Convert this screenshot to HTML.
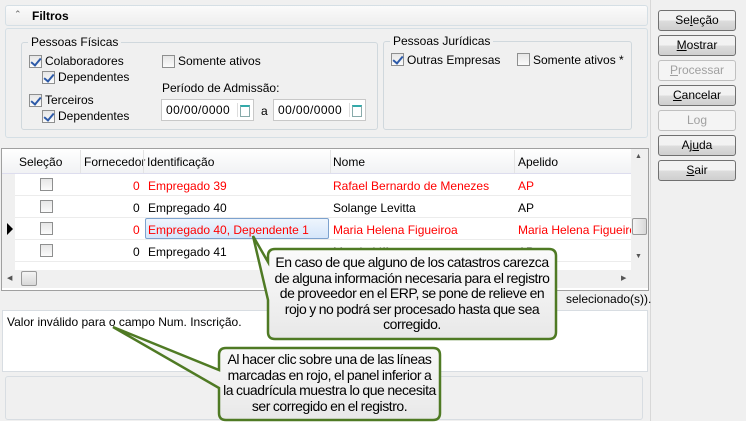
<!DOCTYPE html>
<html><head><meta charset="utf-8"><style>
*{box-sizing:border-box;margin:0;padding:0}
body{width:746px;height:434px;background:#f0f0f0;font:12px "Liberation Sans",sans-serif;color:#000;position:relative;overflow:hidden}
.a{position:absolute}
.box{position:absolute;border:1px solid #d5dfe5;border-radius:3px}
.cb{position:absolute;width:13px;height:13px;border:1px solid #8e8f8f;background:linear-gradient(#e6e6e6,#fbfbfb)}
.cb.c::after{content:"";position:absolute;left:3px;top:0px;width:4px;height:8px;border:solid #2d5aa8;border-width:0 2px 2px 0;transform:rotate(40deg)}
.t{position:absolute;white-space:nowrap;font-size:12px}
.btn{position:absolute;left:658px;width:78px;height:21px;border:1px solid #707070;border-radius:3px;background:linear-gradient(#f2f2f2 50%,#dddddd 50%,#cfcfcf);text-align:center;line-height:19px;font-size:12px}
.btn.d{border-color:#c0c0c0;color:#a0a0a0;background:#f4f4f4}
.date{position:absolute;height:22px;width:93px;border:1px solid #c8c8c8;background:#fff;font-size:12px;line-height:20px;padding-left:4px;letter-spacing:.4px}
.date::before{content:"";position:absolute;right:15px;top:3px;width:1px;height:14px;background:#ddd}
.date::after{content:"";position:absolute;right:3px;top:5px;width:8px;height:9px;border:1px solid #8aa;border-top:2px solid #3aa}
.row{position:absolute;left:15px;width:616px;height:22px;border-bottom:1px solid #ececec;background:#fff}
.red{color:#f00}
.co{position:absolute;text-align:center;font:14px/15.6px 'Liberation Sans',sans-serif;letter-spacing:-.45px;word-spacing:-.5px}
</style></head><body>
<div class="box" style="left:5px;top:5px;width:643px;height:21px;background:linear-gradient(#fbfbfb,#eeeeee)"></div>
<div class="t" style="left:14px;top:9px;font-size:9px;color:#666">&#8963;</div>
<div class="t" style="left:32px;top:9px;font-weight:bold">Filtros</div>
<div class="box" style="left:5px;top:28px;width:643px;height:110px"></div>
<div class="box" style="left:21px;top:42px;width:357px;height:88px;border-color:#d0d8dd"></div>
<div class="t" style="left:28px;top:35px;background:#f0f0f0;padding:0 3px">Pessoas Físicas</div>
<div class="cb c" style="left:29px;top:55px"></div><div class="t" style="left:45px;top:54px">Colaboradores</div>
<div class="cb c" style="left:42px;top:71px"></div><div class="t" style="left:58px;top:70px">Dependentes</div>
<div class="cb c" style="left:29px;top:94px"></div><div class="t" style="left:45px;top:93px">Terceiros</div>
<div class="cb c" style="left:42px;top:110px"></div><div class="t" style="left:58px;top:109px">Dependentes</div>
<div class="cb" style="left:162px;top:55px"></div><div class="t" style="left:178px;top:54px">Somente ativos</div>
<div class="t" style="left:162px;top:81px">Período de Admissão:</div>
<div class="date" style="left:161px;top:99px">00/00/0000</div>
<div class="t" style="left:261px;top:104px">a</div>
<div class="date" style="left:273px;top:99px">00/00/0000</div>
<div class="box" style="left:383px;top:41px;width:249px;height:89px;border-color:#d0d8dd"></div>
<div class="t" style="left:390px;top:34px;background:#f0f0f0;padding:0 3px">Pessoas Jurídicas</div>
<div class="cb c" style="left:391px;top:53px"></div><div class="t" style="left:407px;top:53px">Outras Empresas</div>
<div class="cb" style="left:517px;top:53px"></div><div class="t" style="left:533px;top:53px">Somente ativos *</div>
<div class="a" style="left:650px;top:0;width:1px;height:421px;background:#d8d8d8"></div>
<div class="btn" style="top:10px">Se<u>l</u>eção</div>
<div class="btn" style="top:35px"><u>M</u>ostrar</div>
<div class="btn d" style="top:60px"><u>P</u>rocessar</div>
<div class="btn" style="top:85px"><u>C</u>ancelar</div>
<div class="btn d" style="top:110px">Lo<u>g</u></div>
<div class="btn" style="top:135px">Aj<u>u</u>da</div>
<div class="btn" style="top:160px"><u>S</u>air</div>
<div class="a" style="left:1px;top:148px;width:648px;height:143px;border:1px solid #a0a0a0;background:#fff"></div>
<div class="a" style="left:2px;top:149px;width:629px;height:25px;background:linear-gradient(#fff,#f1f2f4);border-bottom:1px solid #dde"></div>
<div class="a" style="left:2px;top:174px;width:13px;height:96px;background:#f0f0f0"></div>
<div class="t" style="left:19px;top:155px">Seleção</div>
<div class="t" style="left:84px;top:155px">Fornecedor</div>
<div class="t" style="left:147px;top:155px">Identificação</div>
<div class="t" style="left:333px;top:155px">Nome</div>
<div class="t" style="left:518px;top:155px">Apelido</div>
<div class="a" style="left:80px;top:150px;width:1px;height:23px;background:#e4e4e4"></div>
<div class="a" style="left:143px;top:150px;width:1px;height:23px;background:#e4e4e4"></div>
<div class="a" style="left:330px;top:150px;width:1px;height:23px;background:#e4e4e4"></div>
<div class="a" style="left:514px;top:150px;width:1px;height:23px;background:#e4e4e4"></div>
<div class="row" style="top:174px"></div>
<div class="cb" style="left:40px;top:178px"></div><div class="t red" style="left:133px;top:179px">0</div>
<div class="t red" style="left:148px;top:179px">Empregado 39</div><div class="t red" style="left:333px;top:179px">Rafael Bernardo de Menezes</div><div class="t red" style="left:518px;top:179px">AP</div>
<div class="row" style="top:196px"></div>
<div class="cb" style="left:40px;top:200px"></div><div class="t" style="left:133px;top:201px">0</div>
<div class="t" style="left:148px;top:201px">Empregado 40</div><div class="t" style="left:333px;top:201px">Solange Levitta</div><div class="t" style="left:518px;top:201px">AP</div>
<div class="row" style="top:218px"></div>
<div class="a" style="left:7px;top:223px;border-left:6px solid #000;border-top:6px solid transparent;border-bottom:6px solid transparent"></div>
<div class="cb" style="left:40px;top:222px"></div><div class="t red" style="left:133px;top:223px">0</div>
<div class="a" style="left:145px;top:218px;width:184px;height:21px;border:1px solid #7da2ce;border-radius:2px;background:linear-gradient(#eef5fd,#d5e6fa)"></div>
<div class="t red" style="left:148px;top:223px">Empregado 40, Dependente 1</div><div class="t red" style="left:333px;top:223px">Maria Helena Figueiroa</div>
<div class="a" style="left:518px;top:218px;width:113px;height:22px;overflow:hidden"><div class="t red" style="left:0;top:5px">Maria Helena Figueiroa</div></div>
<div class="row" style="top:240px"></div>
<div class="cb" style="left:40px;top:244px"></div><div class="t" style="left:133px;top:245px">0</div>
<div class="t" style="left:148px;top:245px">Empregado 41</div><div class="t" style="left:333px;top:245px">Marcia Liff</div><div class="t" style="left:518px;top:245px">AP</div>
<div class="a" style="left:631px;top:149px;width:17px;height:121px;background:#f0f0f0"></div>
<div class="t" style="left:635px;top:153px;font-size:7px;color:#555">▲</div>
<div class="t" style="left:635px;top:253px;font-size:7px;color:#555">▼</div>
<div class="a" style="left:632px;top:218px;width:15px;height:17px;border:1px solid #999;border-radius:2px;background:linear-gradient(90deg,#f4f4f4,#d8d8d8)"></div>
<div class="a" style="left:2px;top:270px;width:646px;height:18px;background:#f0f0f0"></div>
<div class="t" style="left:7px;top:274px;font-size:7px;color:#555">◀</div>
<div class="t" style="left:621px;top:274px;font-size:7px;color:#555">▶</div>
<div class="a" style="left:21px;top:271px;width:16px;height:15px;border:1px solid #999;border-radius:2px;background:linear-gradient(#f4f4f4,#d8d8d8)"></div>
<div class="t" style="left:566px;top:292px">selecionado(s)).</div>
<div class="a" style="left:2px;top:310px;width:646px;height:62px;background:#fff;border:1px solid #d8dde2"></div>
<div class="t" style="left:7px;top:315px">Valor inválido para o campo Num. Inscrição.</div>
<div class="box" style="left:5px;top:376px;width:638px;height:44px;background:#f0f0f0;border-color:#d8dde2"></div>
<div class="a" style="left:0;top:421px;width:746px;height:13px;background:#fff"></div>
<svg class="a" style="left:0;top:0" width="746" height="434">
<defs><linearGradient id="g" x1="0" y1="0" x2="0" y2="1"><stop offset="0" stop-color="#fdfdfd"/><stop offset="1" stop-color="#e8e8e8"/></linearGradient></defs>
<path d="M275,249 H549 Q556,249 556,256 V332 Q556,339 549,339 H275 Q268,339 268,332 V300 L253,236 L268,262 V256 Q268,249 275,249 Z" fill="url(#g)" stroke="#4f7a24" stroke-width="2.5"/>
<path d="M226,348 H433 Q440,348 440,355 V413 Q440,420 433,420 H226 Q219,420 219,413 V388 L113,327 L219,370 V355 Q219,348 226,348 Z" fill="url(#g)" stroke="#4f7a24" stroke-width="2.5"/>
</svg>
<div class="co" style="left:268px;top:255px;width:288px">En caso de que alguno de los catastros carezca<br>de alguna información necesaria para el registro<br>de proveedor en el ERP, se pone de relieve en<br>rojo y no podrá ser procesado hasta que sea<br>corregido.</div>
<div class="co" style="left:219px;top:352px;width:221px">Al hacer clic sobre una de las líneas<br>marcadas en rojo, el panel inferior a<br>la cuadrícula muestra lo que necesita<br>ser corregido en el registro.</div>
</body></html>
